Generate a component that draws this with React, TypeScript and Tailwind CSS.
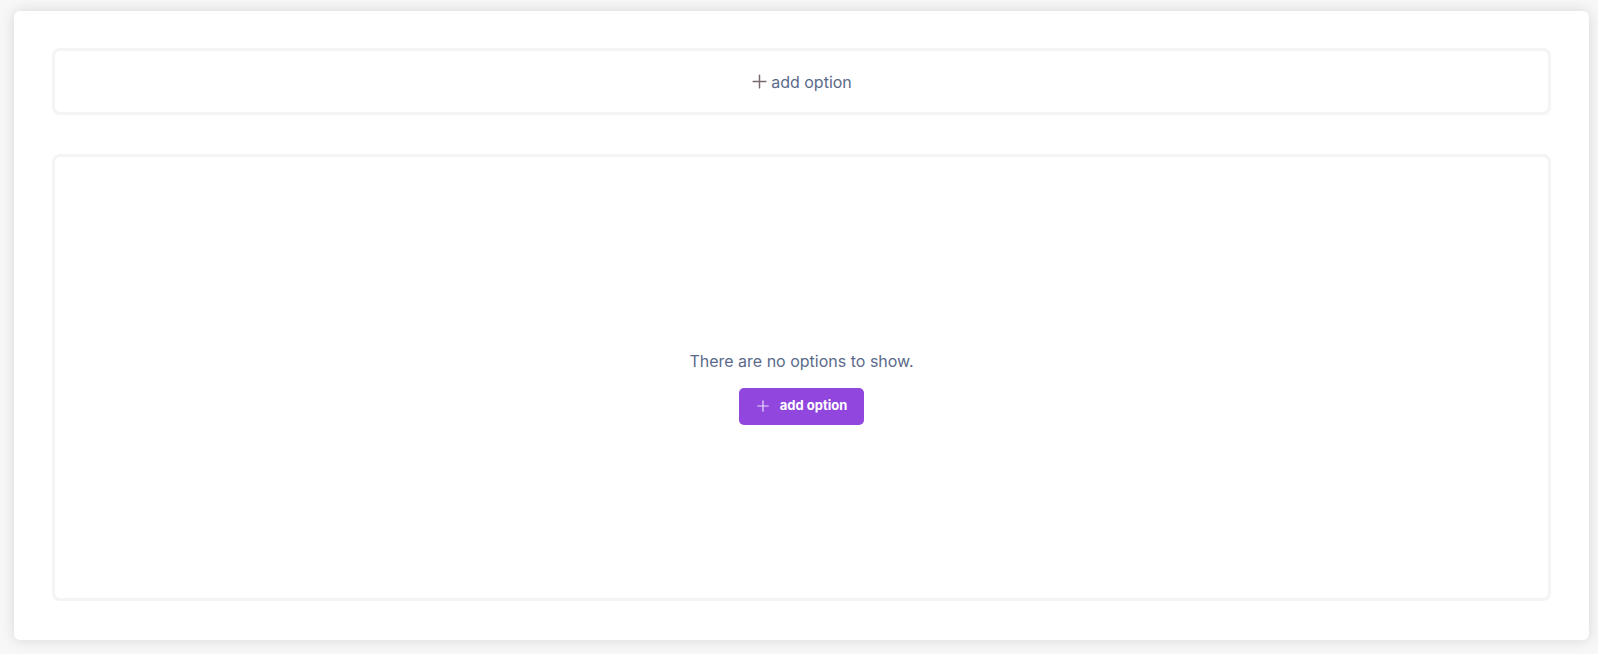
import React from 'react'

const Plus = ({ className }: { className?: string }) => (
  <svg viewBox="0 0 16 16" className={className} fill="none" stroke="currentColor" strokeWidth="1.4" strokeLinecap="round">
    <path d="M8 2v12M2 8h12" />
  </svg>
)

const App = () => {
  return (
    <div className="h-[654px] bg-[#f7f7f7] pl-[14px] pr-[9px] pt-[11px] pb-[14px] font-['Inter',sans-serif]">
      <div className="flex h-full flex-col gap-[39px] rounded-[6px] bg-white px-[38px] pt-[37px] pb-[39px] shadow-[0_0_14px_rgba(0,0,0,0.13)]">
        <button className="flex h-[67px] shrink-0 items-center justify-center gap-[3px] rounded-[8px] border-[3px] border-[#f4f4f5] text-[16px] text-[#5a6a8a]">
          <Plus className="h-[17px] w-[17px] text-[#7a6a70]" />
          <span>add option</span>
        </button>

        <div className="flex flex-1 flex-col items-center justify-center rounded-[8px] border-[3px] border-[#f4f4f5] pt-[18px]">
          <p className="text-[16px] text-[#5a6a8a]">There are no options to show.</p>
          <button className="mt-[15px] flex h-[37px] w-[125px] items-center justify-center gap-[10px] rounded-[5px] bg-[#9146dd] text-[13px] font-bold text-white">
            <Plus className="h-[14px] w-[14px] text-[#e9dcf8]" />
            <span>add option</span>
          </button>
        </div>
      </div>
    </div>
  )
}

export default App
